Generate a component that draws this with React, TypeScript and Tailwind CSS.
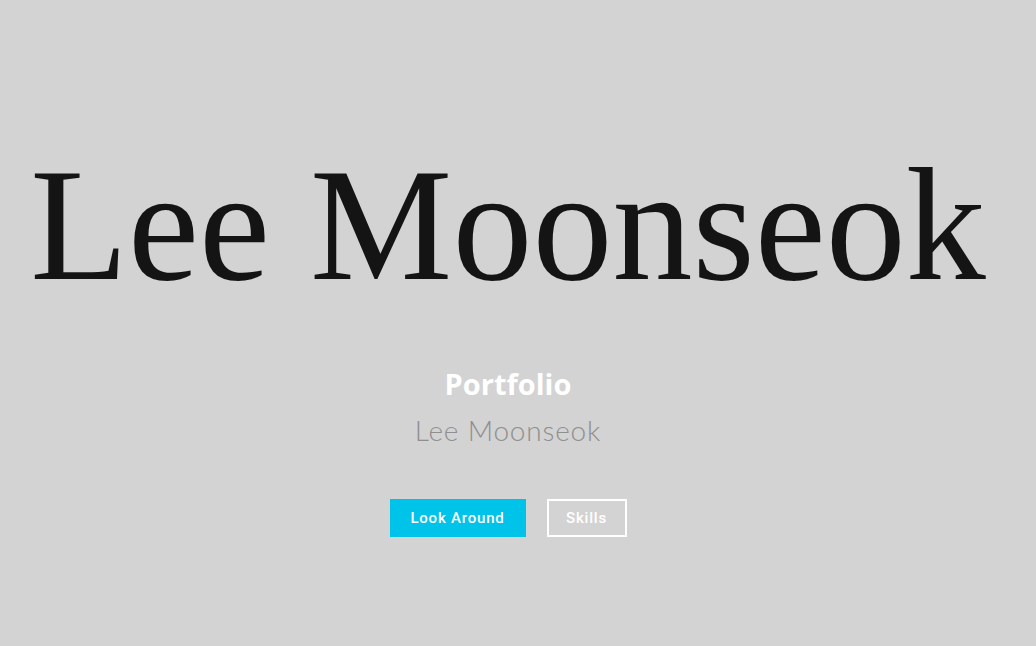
export default function App() {
  return (
    <div className="min-h-[646px] w-full bg-[#d3d3d3] overflow-hidden">
      <div className="w-[1016px] flex flex-col items-center">
        <h1 className="mt-[125px] font-['Liberation_Serif',serif] text-[160px] leading-[200px] text-[#141414] whitespace-nowrap">
          Lee Moonseok
        </h1>

        <h2 className="mt-[41px] font-['Open_Sans',sans-serif] font-bold text-[29px] leading-[36px] text-white">
          Portfolio
        </h2>
        <p className="mt-[11px] font-['Lato',sans-serif] font-light text-[28px] leading-[34px] tracking-[0.8px] text-[#8f8f8f]">
          Lee Moonseok
        </p>

        <div className="mt-[52px] flex gap-[21px]">
          <button className="h-[38px] w-[136px] bg-[#00c3ea] text-white font-['Roboto',sans-serif] font-medium text-[15px] tracking-[0.8px]">
            Look Around
          </button>
          <button className="h-[38px] w-[80px] border-2 border-white text-white font-['Roboto',sans-serif] font-medium text-[15px] tracking-[0.8px]">
            Skills
          </button>
        </div>
      </div>
    </div>
  )
}
